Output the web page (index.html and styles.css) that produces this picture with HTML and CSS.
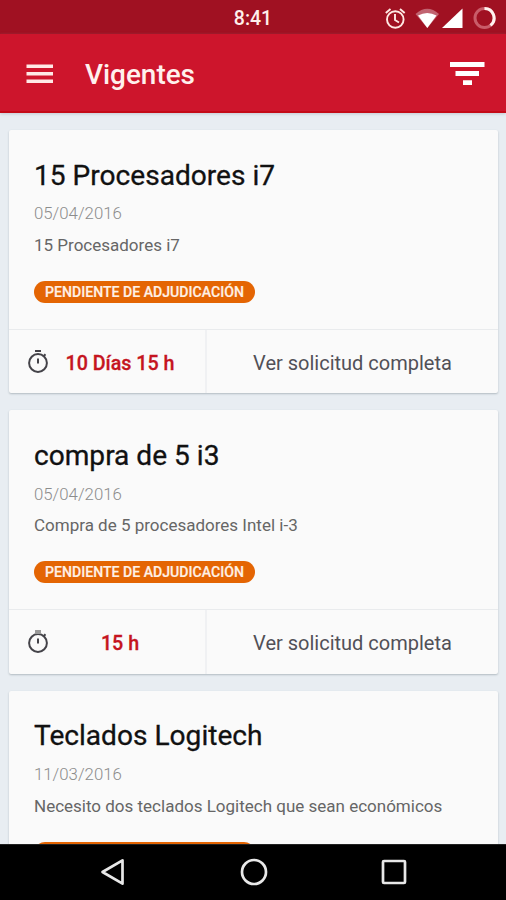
FILE: index.html
```html
<!DOCTYPE html>
<html lang="es">
<head>
<meta charset="utf-8">
<title>Vigentes</title>
<link rel="stylesheet" href="styles.css">
</head>
<body>
<div class="screen">
  <div class="status">
    <span class="clock">8:41</span>
    <svg class="status-icons" width="116" height="34" viewBox="0 0 116 34">
      <g fill="none" stroke="#ffe9e4" stroke-width="1.9">
        <circle cx="15.3" cy="18.5" r="8.3"/>
        <path d="M15 13v6l4 2.500M5.800 12l4.700-4M20 8l4.700 4"/>
      </g>
      <path d="M35.500 13Q47.300 2.500 59 13L47.300 27Z" fill="#c16370"/>
      <path d="M38 14.500Q47.300 9.500 56.500 14.500L47.300 27Z" fill="#fff"/>
      <path d="M62 27 82.500 7.500V27Z" fill="#fff"/>
      <circle cx="104.500" cy="17" r="9.500" fill="none" stroke="#c95c69" stroke-width="3"/>
      <path d="M104.500 7.500A9.500 9.500 0 0 1 110.500 24.400" fill="none" stroke="#fff3f0" stroke-width="3"/>
    </svg>
  </div>
  <header class="toolbar">
    <svg width="28" height="20" viewBox="0 0 28 20" fill="#ffe9e6"><path d="M.5 .5h26.500v3.600H.5zM.5 8h26.500v3.600H.5zM.5 15.500h26.500v3.600H.5z"/></svg>
    <h1>Vigentes</h1>
    <svg class="filter" width="36" height="26" viewBox="0 0 36 26" fill="#fff"><path d="M1 1h34.500v5H1zM6.500 10h23.500v5H6.500zM14 19.300h9v4.700h-9z"/></svg>
  </header>
  <main>
    <article class="card">
      <div class="body">
        <h2>15 Procesadores i7</h2>
        <p class="date">05/04/2016</p>
        <p class="desc">15 Procesadores i7</p>
        <span class="badge">PENDIENTE DE ADJUDICACIÓN</span>
      </div>
      <footer>
        <div class="time"><svg width="22" height="24" viewBox="0 0 22 24"><circle cx="11" cy="13.500" r="8.900"/><path d="M8 1.500h6M11 9v5M16.800 6.500l1.700-1.700"/></svg><strong>10 Días 15 h</strong></div>
        <a class="more">Ver solicitud completa</a>
      </footer>
    </article>
    <article class="card">
      <div class="body">
        <h2>compra de 5 i3</h2>
        <p class="date">05/04/2016</p>
        <p class="desc">Compra de 5 procesadores Intel i-3</p>
        <span class="badge">PENDIENTE DE ADJUDICACIÓN</span>
      </div>
      <footer>
        <div class="time"><svg width="22" height="24" viewBox="0 0 22 24"><circle cx="11" cy="13.500" r="8.900"/><path d="M11 9v5M16.800 6.500l1.700-1.700"/><path class="knob" d="M8 2.500h6"/></svg><strong>15 h</strong></div>
        <a class="more">Ver solicitud completa</a>
      </footer>
    </article>
    <article class="card">
      <div class="body">
        <h2>Teclados Logitech</h2>
        <p class="date">11/03/2016</p>
        <p class="desc">Necesito dos teclados Logitech que sean económicos</p>
        <span class="badge"></span>
      </div>
    </article>
  </main>
  <nav>
    <svg width="28" height="30" viewBox="0 0 28 30"><path d="M3.500 15 23.500 3.300V26.700Z"/></svg>
    <svg width="28" height="30" viewBox="0 0 28 30"><circle cx="14" cy="15" r="12"/></svg>
    <svg width="28" height="30" viewBox="0 0 28 30"><rect x="3" y="4" width="22" height="22" rx="1"/></svg>
  </nav>
</div>
</body>
</html>
```
FILE: styles.css
```css
* { box-sizing: border-box; }
body { margin: 0; font-family: Roboto, "Liberation Sans", sans-serif; }
h1, h2, p { margin: 0; white-space: nowrap; }
svg { display: block; flex: none; }
.screen { width: 506px; height: 900px; display: flex; flex-direction: column; overflow: hidden; background: #e8edf2; }
.status { height: 34px; flex: none; background: #a01122; display: grid; grid-template-columns: 1fr auto 1fr; align-items: center; }
.clock { grid-column: 2; color: #fff0ec; font-size: 19.5px; font-weight: 500; line-height: 34px; padding-top: 2px; }
.status-icons { justify-self: end; margin-right: 10px; }
.toolbar { height: 79px; flex: none; background: #cd152c; border-bottom: 2px solid #c40a17; box-shadow: 0 1px 3px #8b97a266; display: flex; align-items: center; padding: 2px 21px 0 26px; }
h1 { margin-left: 31px; color: #fff0ed; font-size: 27.900px; font-weight: 500; line-height: 36px; padding-top: 3px; }
.filter { margin-left: auto; }
main { flex: 1; min-height: 0; overflow: hidden; padding: 17px 8px 0 9px; display: flex; flex-direction: column; gap: 17.050px; }
.card { height: 263.400px; flex: none; background: #fafafa; border-radius: 2px; box-shadow: 0 1px 2px #74808c77; display: flex; flex-direction: column; }
.body { height: 199px; flex: none; padding: 27px 25px 0; }
h2 { color: #111; font-size: 28.100px; font-weight: 400; line-height: 36px; padding-top: .500px; -webkit-text-stroke: .3px #111; }
.date { color: #8c8c8c; font-size: 16.800px; line-height: 22px; font-weight: 300; margin-top: 8.700px; }
.desc { color: #666; font-size: 17px; line-height: 22px; margin-top: 9.500px; }
.badge { display: flex; align-items: center; justify-content: center; width: 221px; height: 22px; margin-top: 25.300px; border-radius: 11px; background: #e46503; color: #fff0e5; font-size: 14.100px; font-weight: 500; white-space: nowrap; -webkit-text-stroke: .2px #fff0e5; }
footer { flex: 1; display: flex; border-top: 1px solid #e9ebed; }
.time { width: 198px; border-right: 2px solid #f0f1f3; display: flex; align-items: center; padding: 0 18px; }
.time svg { fill: none; stroke: #444349; stroke-width: 2; transform: translateY(-.5px); }
.time .knob { stroke: #999; stroke-width: 4; }
.time strong { flex: 1; text-align: center; color: #c51420; font-size: 19.700px; font-weight: 500; padding-top: 3px; padding-right: 10px; margin-right: -14px; white-space: nowrap; -webkit-text-stroke: .3px #c51420; }
.more { flex: 1; display: flex; align-items: center; justify-content: center; color: #515057; font-size: 20px; padding-top: 2px; white-space: nowrap; }
nav { height: 56px; flex: none; background: #000; border-top: 1px solid #222; display: flex; align-items: center; justify-content: center; gap: 112.500px; padding: 0 0 1px 1px; }
nav svg { fill: none; stroke: #e8e8e8; stroke-width: 2.700; stroke-linejoin: round; }
```
